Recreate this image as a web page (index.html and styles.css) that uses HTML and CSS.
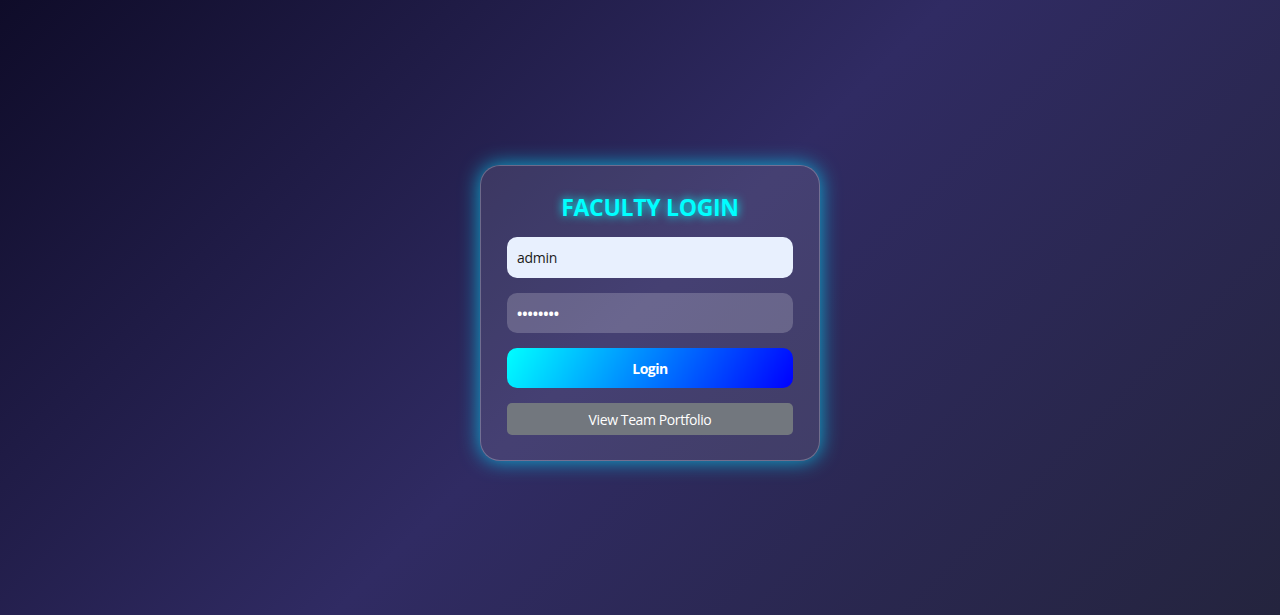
FILE: index.html
```html
<!DOCTYPE html>
<html lang="en">
<head>
<meta charset="utf-8">
<title>Faculty Login</title>
<link rel="stylesheet" href="styles.css">
</head>
<body>
<main class="page">
  <form class="card">
    <h2 class="title">FACULTY LOGIN</h2>
    <input class="field field-user" type="text" value="admin">
    <input class="field field-pass" type="password" value="12345678">
    <button class="btn-login" type="button">Login</button>
    <button class="btn-team" type="button">View Team Portfolio</button>
  </form>
</main>
</body>
</html>
```
FILE: styles.css
```css
* { box-sizing: border-box; }
html, body { margin: 0; height: 100%; }
body {
  font-family: "Open Sans", "Noto Sans", sans-serif;
  background: linear-gradient(135deg, #0f0c29 0%, #302b63 50%, #24243e 100%);
  color: #fff;
}
.page {
  height: 615px;
  display: flex;
  align-items: center;
  justify-content: center;
  padding: 11px 0 0 20px;
}
.card {
  width: 340px;
  padding: 25px 26px 25px;
  border-radius: 20px;
  background: rgba(255, 255, 255, 0.1);
  border: 1px solid rgba(255, 255, 255, 0.25);
  box-shadow: 0 0 20px rgba(0, 220, 255, 0.75);
  display: flex;
  flex-direction: column;
  gap: 15px;
}
.title {
  margin: 0 0 -1px;
  height: 32px;
  line-height: 32px;
  text-align: center;
  font-size: 23px;
  font-weight: 700;
  color: #00ffff;
  letter-spacing: -0.3px;
  text-shadow: 0 0 10px #00ffff;
}
.field {
  height: 40px;
  border: none;
  border-radius: 10px;
  padding: 0 10px;
  font-family: inherit;
  font-size: 14px;
  letter-spacing: -0.3px;
  outline: none;
}
.field-user {
  height: 41px;
  background: #e8f0fe;
  color: #1a1a1a;
}
.field-pass {
  background: rgba(255, 255, 255, 0.2);
  color: #fff;
  font-weight: 700;
  letter-spacing: 0;
}
.btn-login {
  height: 40px;
  border: none;
  border-radius: 10px;
  background: linear-gradient(120deg, #00ffff 0%, #0000ff 100%);
  color: #fff;
  font-family: inherit;
  font-size: 14px;
  font-weight: 700;
  letter-spacing: -0.5px;
}
.btn-team {
  height: 32px;
  border: none;
  border-radius: 5px;
  background: #72777e;
  color: #fff;
  font-family: inherit;
  font-size: 14px;
  letter-spacing: -0.4px;
}
```
